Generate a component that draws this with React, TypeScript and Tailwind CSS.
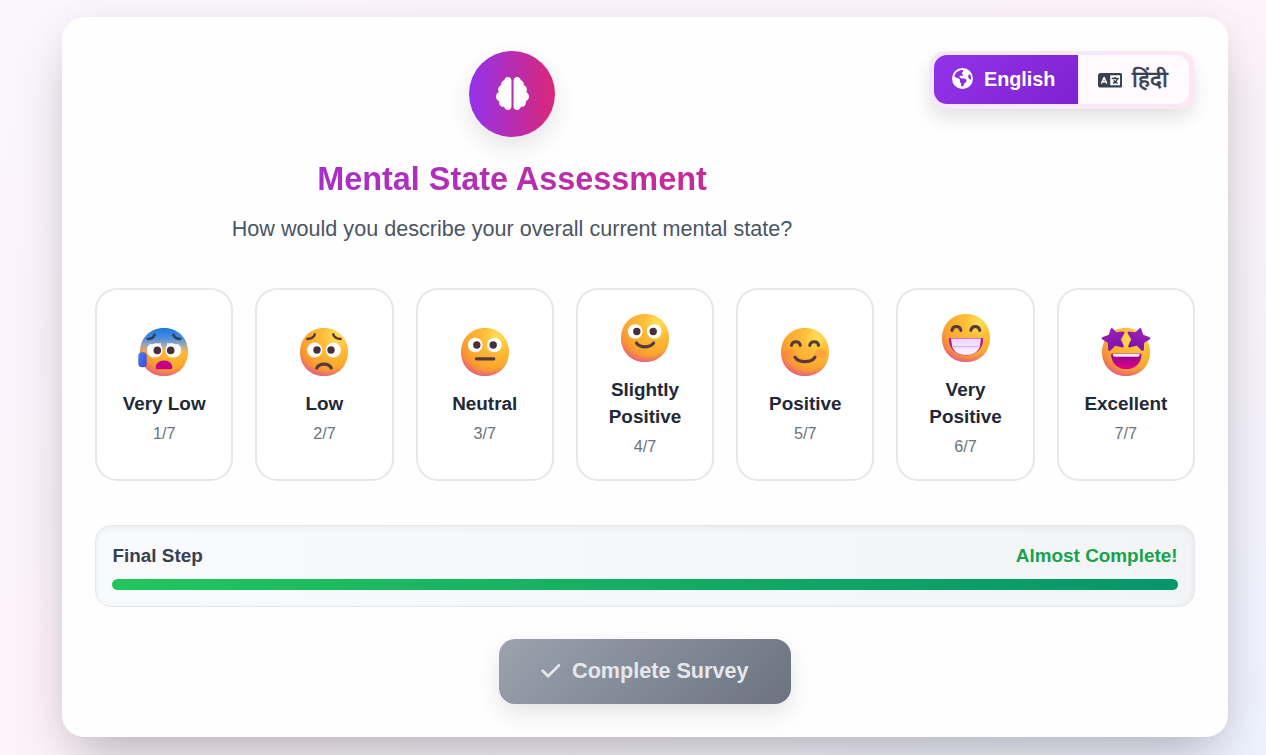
import type { ReactNode } from "react";
import { FaBrain, FaCheck, FaEarthAmericas, FaLanguage } from "react-icons/fa6";

const FACE = "M24 0C37.8 0 48 10.2 48 24S37.8 48 24 48 0 37.8 0 24 10.2 0 24 0Z";
const STAR_LEFT =
  "M8.6 1Q9.6-.8 11 .8L14.4 4.2 20.6 3.6Q23.4 3.6 22 6L18.8 11.2 21.6 17.4Q22.4 20 19.8 19.3L13.2 17.8 8.4 22.6Q6.4 24 6.2 21.4L5.8 14.8.4 11.4Q-1.2 10 .8 9L6.9 6.8Z";

function Emoji({ id, blue = false, children }: { id: string; blue?: boolean; children: ReactNode }) {
  return (
    <svg viewBox="0 0 48 48" className="h-12 w-12 shrink-0 overflow-visible" aria-hidden="true">
      <defs>
        <radialGradient id={`${id}-base`} cx="0.76" cy="0.18" r="0.88">
          <stop offset="0" stopColor="#ffe055" />
          <stop offset="0.35" stopColor="#fdbd38" />
          <stop offset="0.75" stopColor="#fba62e" />
          <stop offset="1" stopColor="#f28340" />
        </radialGradient>
        <radialGradient id={`${id}-pink`} cx="0.55" cy="0.3" r="0.73">
          <stop offset="0.78" stopColor="#ef6a72" stopOpacity="0" />
          <stop offset="1" stopColor="#e4569c" stopOpacity="0.95" />
        </radialGradient>
        <linearGradient id={`${id}-blue`} x1="0" y1="0" x2="0" y2="1">
          <stop offset="0" stopColor="#1b78e2" />
          <stop offset="0.22" stopColor="#4b8fdf" />
          <stop offset="0.38" stopColor="#9aa3c8" stopOpacity="0.8" />
          <stop offset="0.54" stopColor="#f5b26b" stopOpacity="0" />
        </linearGradient>
        <linearGradient id={`${id}-mouth`} x1="0" y1="0" x2="0" y2="1">
          <stop offset="0" stopColor="#8a078f" />
          <stop offset="1" stopColor="#e40088" />
        </linearGradient>
        <linearGradient id={`${id}-star`} x1="0" y1="0" x2="0.5" y2="1">
          <stop offset="0" stopColor="#a324b4" />
          <stop offset="1" stopColor="#7c13ad" />
        </linearGradient>
        <linearGradient id={`${id}-teeth`} x1="0" y1="0" x2="0" y2="1">
          <stop offset="0" stopColor="#ecd5fa" />
          <stop offset="1" stopColor="#fbf3ff" />
        </linearGradient>
        <linearGradient id={`${id}-hand`} x1="0" y1="0" x2="1" y2="1">
          <stop offset="0" stopColor="#4180f4" />
          <stop offset="1" stopColor="#3c4bd5" />
        </linearGradient>
      </defs>
      <path d={FACE} fill={`url(#${id}-base)`} />
      <path d={FACE} fill={`url(#${id}-pink)`} />
      {blue && <path d={FACE} fill={`url(#${id}-blue)`} />}
      {children}
    </svg>
  );
}

function Eyes({ x1, x2, y, p1, p2, r = 7.3 }: { x1: number; x2: number; y: number; p1: number; p2: number; r?: number }) {
  return (
    <>
      <circle cx={x1} cy={y} r={r} fill="#fff" />
      <circle cx={x2} cy={y} r={r} fill="#fff" />
      <circle cx={p1} cy={y} r="3.7" fill="#482f3b" />
      <circle cx={p2} cy={y} r="3.7" fill="#482f3b" />
    </>
  );
}

function Line({ d, w = 3 }: { d: string; w?: number }) {
  return <path d={d} fill="none" stroke="#563a3f" strokeWidth={w} strokeLinecap="round" strokeLinejoin="round" />;
}

const options = [
  {
    label: "Very Low",
    icon: (
      <Emoji id="e1" blue>
        <g fill="none" stroke="#31405f" strokeWidth="2.6" strokeLinecap="round">
          <path d="M7.8 11Q13 11 14.8 6.6" />
          <path d="M33.2 6.6Q35 11 40.2 11" />
        </g>
        <path d="M7 22.5C7 19 8.2 17.3 9.3 17L9.8 15.8 12 16.4Q16 14.5 19 15.5L21 15.2 20.8 17.3C24 21 23 29.6 14.6 29.6 10 29.6 7 26.5 7 22.5Z" fill="#fff" />
        <path d="M41 22.5C41 19 39.8 17.3 38.7 17L38.2 15.8 36 16.4Q32 14.5 29 15.5L27 15.2 27.2 17.3C24 21 25 29.6 33.4 29.6 38 29.6 41 26.5 41 22.5Z" fill="#fff" />
        <circle cx="17.3" cy="22.4" r="3.8" fill="#482f3b" />
        <circle cx="30.7" cy="22.4" r="3.8" fill="#482f3b" />
        <path d="M15.7 39.6C15.7 35.5 19 32.4 24 32.4S32.3 35.5 32.3 39.6Q32.3 41.2 30.8 41.2H17.2Q15.7 41.2 15.7 39.6Z" fill="#c40083" />
        <rect x="-1.7" y="24.3" width="8.4" height="15" rx="3.8" fill="url(#e1-hand)" />
      </Emoji>
    ),
  },
  {
    label: "Low",
    icon: (
      <Emoji id="e2">
        <Line d="M7.5 11Q13 11 14.8 6.4" w={2.6} />
        <Line d="M33.2 6.4Q35 11 40.5 11" w={2.6} />
        <Eyes x1={14.7} x2={33.3} y={22} p1={17} p2={31} r={7.6} />
        <Line d="M16.8 40Q18.8 36.2 24 36.2T31.2 40" w={3.2} />
      </Emoji>
    ),
  },
  {
    label: "Neutral",
    icon: (
      <Emoji id="e3">
        <Eyes x1={14.2} x2={33.3} y={17} p1={15.8} p2={32.2} />
        <Line d="M15.5 30.8H32.7" w={3.3} />
      </Emoji>
    ),
  },
  {
    label: "Slightly Positive",
    icon: (
      <Emoji id="e4">
        <Eyes x1={14.2} x2={33.3} y={17.5} p1={15.8} p2={32.2} />
        <Line d="M15.4 29Q18.5 32.9 24 32.9T32.6 29" w={3.1} />
      </Emoji>
    ),
  },
  {
    label: "Positive",
    icon: (
      <Emoji id="e5">
        <ellipse cx="8" cy="25.5" rx="5.8" ry="4.2" fill="#ff7650" opacity="0.36" />
        <ellipse cx="39.5" cy="25.5" rx="5.8" ry="4.2" fill="#ff7650" opacity="0.36" />
        <Line d="M10.4 17.4Q11.2 13.8 14.9 13.8T19.3 17.4" />
        <Line d="M28.7 17.4Q29.5 13.8 33.2 13.8T37.6 17.4" />
        <Line d="M14 29.2Q17.3 33.7 24 33.7T34 29.2" w={3.2} />
      </Emoji>
    ),
  },
  {
    label: "Very Positive",
    icon: (
      <Emoji id="e6">
        <Line d="M9.9 16.4Q10.7 12.6 14.4 12.6T18.9 16.4" />
        <Line d="M28.8 16.4Q29.6 12.6 33.3 12.6T37.8 16.4" />
        <path d="M7.8 24H40.2Q41.3 24 41.2 25.3C41 35 34 41.4 24 41.4S7 35 6.8 25.3Q6.7 24 7.8 24Z" fill="#b219a0" />
        <path d="M9 24.4H39L37.7 33C36 38 31 41 24 41S12 38 10.3 33Z" fill="url(#e6-teeth)" />
        <path d="M10.2 32.7H37.8" fill="none" stroke="#d39be6" strokeWidth=".8" />
      </Emoji>
    ),
  },
  {
    label: "Excellent",
    icon: (
      <Emoji id="e7">
        <path d="M24 4.5C27.5 8 27 11 27.8 13.5 27 17 26 19 24 20.5 22 19 21 17 20.2 13.5 21 11 20.5 8 24 4.5Z" fill="#ffd653" opacity=".75" />
        <path d={STAR_LEFT} fill="url(#e7-star)" />
        <path d={STAR_LEFT} fill="url(#e7-star)" transform="matrix(-1 0 0 1 48 0)" />
        <path d="M10.4 25.5H38.2Q39.7 25.5 39.5 27.2C38.6 36 32.8 41.1 24.3 41.1S10 36 9.1 27.2Q8.9 25.5 10.4 25.5Z" fill="url(#e7-mouth)" />
        <path d="M10.6 25.7H38L37.4 28Q37 28.8 36 28.8H12.6Q11.6 28.8 11.2 28Z" fill="#f3e5fb" />
      </Emoji>
    ),
  },
];

export default function App() {
  return (
    <div className="h-[755px] overflow-hidden bg-[linear-gradient(to_bottom_right,#faf5ff_0%,#fdf2f8_50%,#eef2ff_100%)] pt-[17px] pr-[38px] pl-[62px] font-['Liberation_Sans',Arial,sans-serif]">
      <main className="h-[720px] rounded-[22px] bg-[#fefefe] px-[33px] pt-[34px] shadow-[0_27px_56px_-12px_rgba(0,0,0,0.26),0_0_36px_rgba(0,0,0,0.03)]">
        <header className="flex h-[237px] items-start">
          <div className="flex flex-1 flex-col items-center">
            <div className="flex size-[86px] items-center justify-center rounded-full bg-[linear-gradient(90deg,#9333ea,#db2777)] text-white shadow-[0_10px_25px_rgba(0,0,0,0.1)]">
              <FaBrain className="mb-0.5 size-[33px]" />
            </div>
            <h1 className="mt-[22px] w-full bg-[linear-gradient(90deg,#9333ea,#db2777)] bg-clip-text text-center text-[32.4px] leading-10 font-bold text-transparent">
              Mental State Assessment
            </h1>
            <p className="mt-[14px] text-[21.6px] leading-8 text-[#4b5563]">
              How would you describe your overall current mental state?
            </p>
          </div>
          <div className="flex h-[58px] w-[266px] rounded-[16px] bg-[linear-gradient(90deg,#f3e8ff,#fce7f3)] pt-1 pr-1.5 pb-[5px] pl-[5px] shadow-[0_10px_20px_-2px_rgba(0,0,0,0.12)]">
            <button className="flex w-[144px] items-center rounded-l-[13px] bg-[linear-gradient(135deg,#9333ea,#7e22ce)] pl-[18px] text-[19.8px] font-bold text-white">
              <FaEarthAmericas className="mr-[11px] mb-[2px] size-[21px]" />
              English
            </button>
            <button className="ml-px flex flex-1 items-center rounded-r-[13px] bg-white/80 pl-[18.5px] text-[22.4px] font-medium text-[#374151] [-webkit-text-stroke:0.6px_#374151]">
              <FaLanguage className="mt-px mr-[10px] size-[24.5px]" />
              हिंदी
            </button>
          </div>
        </header>

        <section className="grid h-[193px] grid-cols-7 gap-[22px]">
          {options.map((option, index) => (
            <button
              key={option.label}
              className="flex flex-col items-center justify-center rounded-[22px] border-2 border-[#e5e7eb] bg-white px-[20px] pt-[3.5px]"
            >
              {option.icon}
              <span className="mt-[14px] text-center text-[18.9px] leading-[27px] font-bold text-[#1f2937]">{option.label}</span>
              <span className="mt-1 text-[16.2px] leading-6 text-[#6b7280]">{index + 1}/7</span>
            </button>
          ))}
        </section>

        <section className="mt-11 h-[82px] rounded-[16px] border border-[#e5e7eb] bg-[linear-gradient(90deg,#f9fafb,#f3f4f6)] px-4 pt-4 shadow-[inset_0_2px_7px_rgba(0,0,0,0.06)]">
          <div className="flex justify-between text-[18.9px] leading-[27px] font-bold">
            <span className="pl-[0.5px] text-[#374151]">Final Step</span>
            <span className="pr-[0.5px] text-[#16a34a]">Almost Complete!</span>
          </div>
          <div className="mt-[10px] h-[11px] rounded-full bg-[linear-gradient(90deg,#22c55e,#059669)]" />
        </section>

        <div className="mt-8 flex justify-center">
          <button className="flex h-[65px] w-[292px] items-center justify-center rounded-[16px] bg-[linear-gradient(135deg,#9ca3af,#6b7280)] pr-px pb-px text-[21.6px] font-bold text-[#e5e7eb] shadow-[0_10px_25px_rgba(0,0,0,0.1)]">
            <FaCheck className="mr-[10px] size-[21.6px]" />
            Complete Survey
          </button>
        </div>
      </main>
    </div>
  );
}
